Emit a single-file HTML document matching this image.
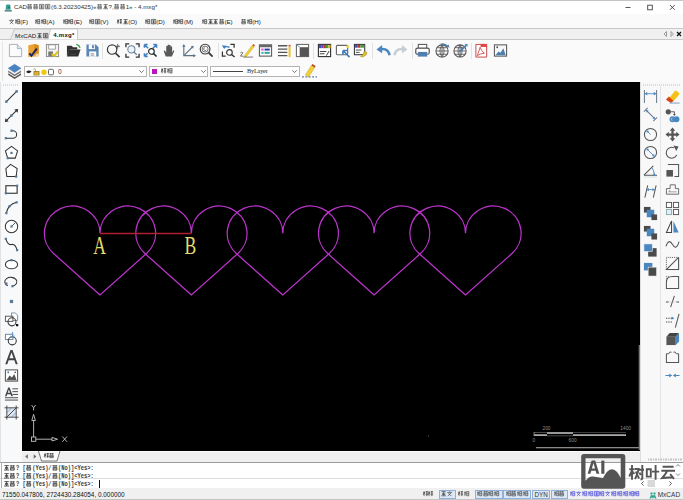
<!DOCTYPE html>
<html><head><meta charset="utf-8">
<style>
*{margin:0;padding:0;box-sizing:border-box}
html,body{width:683px;height:500px;overflow:hidden;background:#f5f5f5;font-family:"Liberation Sans",sans-serif;color:#222}
.a{position:absolute}
.t{position:absolute;white-space:nowrap;line-height:1}
.t b{display:inline-block;position:relative;font-weight:inherit;overflow:visible}
svg{position:absolute;overflow:visible}
</style></head><body>

<div class="a" style="left:0px;top:0px;width:683px;height:14px;background:#fff;"></div>
<div class="a" style="left:0px;top:0px;width:683px;height:1px;background:#c4c4c4;"></div>
<svg style="left:4px;top:3.5px" width="9" height="8" viewBox="0 0 9 8"><path d="M1.6 5.8 L2 1.5 Q2.2 0.5 3.2 0.5 H5.3 Q6.3 0.5 6.4 1.5 L6.6 5.8Z" fill="#3a9a94"/><circle cx="5.2" cy="3.4" r="0.9" fill="#1f6a66"/><path d="M0.3 6.2 H8.2 L7.6 7.6 H1 Z" fill="#2a706c"/></svg>
<div class="t" style="left:14px;top:3.8px;font-size:6.2px;color:#333;">CAD<b style="width:6.0px;height:5.21px;vertical-align:-0.56px"><svg style="left:0.40px;top:0" width="5.21" height="5.21" viewBox="0 0 10 10" preserveAspectRatio="none"><path d="M0.5 1.6 H9.5 M3 0.3 V3.4 M7 0.3 V3.4 M1.6 4.6 H8.4 V9.3 H1.6 Z M1.6 6.95 H8.4" fill="none" stroke="currentColor" stroke-width="1.15"/></svg></b><b style="width:6.0px;height:5.21px;vertical-align:-0.56px"><svg style="left:0.40px;top:0" width="5.21" height="5.21" viewBox="0 0 10 10" preserveAspectRatio="none"><path d="M0.5 1.6 H9.5 M3 0.3 V3.4 M7 0.3 V3.4 M1.6 4.6 H8.4 V9.3 H1.6 Z M1.6 6.95 H8.4" fill="none" stroke="currentColor" stroke-width="1.15"/></svg></b><b style="width:6.0px;height:5.21px;vertical-align:-0.56px"><svg style="left:0.40px;top:0" width="5.21" height="5.21" viewBox="0 0 10 10" preserveAspectRatio="none"><path d="M0.8 0.8 H9.2 V9.3 H0.8 Z M2.8 3.2 H7.2 M2.6 5.6 H7.4 M5 3.2 V7.8 M2.8 7.8 H7.2" fill="none" stroke="currentColor" stroke-width="1.15"/></svg></b><b style="width:6.0px;height:5.21px;vertical-align:-0.56px"><svg style="left:0.40px;top:0" width="5.21" height="5.21" viewBox="0 0 10 10" preserveAspectRatio="none"><path d="M0.8 0.8 H9.2 V9.3 H0.8 Z M2.8 3.2 H7.2 M2.6 5.6 H7.4 M5 3.2 V7.8 M2.8 7.8 H7.2" fill="none" stroke="currentColor" stroke-width="1.15"/></svg></b>(6.3.20230425)«<b style="width:6.0px;height:5.21px;vertical-align:-0.56px"><svg style="left:0.40px;top:0" width="5.21" height="5.21" viewBox="0 0 10 10" preserveAspectRatio="none"><path d="M0.5 1.6 H9.5 M3 0.3 V3.4 M7 0.3 V3.4 M1.6 4.6 H8.4 V9.3 H1.6 Z M1.6 6.95 H8.4" fill="none" stroke="currentColor" stroke-width="1.15"/></svg></b><b style="width:6.0px;height:5.21px;vertical-align:-0.56px"><svg style="left:0.40px;top:0" width="5.21" height="5.21" viewBox="0 0 10 10" preserveAspectRatio="none"><path d="M1 1.1 H9 M5 1.1 V9 M2 4.4 H8 M2 6.7 H8 M0.4 9.1 H9.6" fill="none" stroke="currentColor" stroke-width="1.15"/></svg></b>?,<b style="width:6.0px;height:5.21px;vertical-align:-0.56px"><svg style="left:0.40px;top:0" width="5.21" height="5.21" viewBox="0 0 10 10" preserveAspectRatio="none"><path d="M0.5 1.6 H9.5 M3 0.3 V3.4 M7 0.3 V3.4 M1.6 4.6 H8.4 V9.3 H1.6 Z M1.6 6.95 H8.4" fill="none" stroke="currentColor" stroke-width="1.15"/></svg></b><b style="width:6.0px;height:5.21px;vertical-align:-0.56px"><svg style="left:0.40px;top:0" width="5.21" height="5.21" viewBox="0 0 10 10" preserveAspectRatio="none"><path d="M0.5 1.6 H9.5 M3 0.3 V3.4 M7 0.3 V3.4 M1.6 4.6 H8.4 V9.3 H1.6 Z M1.6 6.95 H8.4" fill="none" stroke="currentColor" stroke-width="1.15"/></svg></b>1» - 4.mxg*</div>
<svg style="left:620px;top:0" width="63" height="14" viewBox="0 0 63 14"><path d="M5.5 7.5 H10.5" stroke="#444" stroke-width="0.9"/><rect x="27.7" y="5.2" width="4.6" height="4.6" fill="none" stroke="#444" stroke-width="0.9"/><path d="M50 5 L54.7 9.8 M54.7 5 L50 9.8" stroke="#444" stroke-width="0.9"/></svg>
<div class="a" style="left:0px;top:14px;width:683px;height:14px;background:#fafafa;"></div>
<div class="t" style="left:9px;top:18.7px;font-size:6.2px;color:#222;"><b style="width:5.6px;height:5.21px;vertical-align:-0.56px"><svg style="left:0.20px;top:0" width="5.21" height="5.21" viewBox="0 0 10 10" preserveAspectRatio="none"><path d="M4.4 0.2 L5.6 1.6 M0.4 2.7 H9.6 M2.4 3.8 L8.2 9.6 M7.6 3.8 L1.6 9.6" fill="none" stroke="currentColor" stroke-width="1.15"/></svg></b><b style="width:5.6px;height:5.21px;vertical-align:-0.56px"><svg style="left:0.20px;top:0" width="5.21" height="5.21" viewBox="0 0 10 10" preserveAspectRatio="none"><path d="M0.5 3 H3.6 M2 0.4 V9.6 M0.5 6.3 L3.6 4.8 M4.6 1.2 H9.5 M5.1 1.2 V9.2 M9 1.2 V9.2 M5.1 5.2 H9 M5.1 9 H9" fill="none" stroke="currentColor" stroke-width="1.15"/></svg></b>(F)</div>
<div class="t" style="left:35px;top:18.7px;font-size:6.2px;color:#222;"><b style="width:5.6px;height:5.21px;vertical-align:-0.56px"><svg style="left:0.20px;top:0" width="5.21" height="5.21" viewBox="0 0 10 10" preserveAspectRatio="none"><path d="M0.5 3 H3.6 M2 0.4 V9.6 M0.5 6.3 L3.6 4.8 M4.6 1.2 H9.5 M5.1 1.2 V9.2 M9 1.2 V9.2 M5.1 5.2 H9 M5.1 9 H9" fill="none" stroke="currentColor" stroke-width="1.15"/></svg></b><b style="width:5.6px;height:5.21px;vertical-align:-0.56px"><svg style="left:0.20px;top:0" width="5.21" height="5.21" viewBox="0 0 10 10" preserveAspectRatio="none"><path d="M0.5 3 H3.6 M2 0.4 V9.6 M0.5 6.3 L3.6 4.8 M4.6 1.2 H9.5 M5.1 1.2 V9.2 M9 1.2 V9.2 M5.1 5.2 H9 M5.1 9 H9" fill="none" stroke="currentColor" stroke-width="1.15"/></svg></b>(A)</div>
<div class="t" style="left:62.5px;top:18.7px;font-size:6.2px;color:#222;"><b style="width:5.6px;height:5.21px;vertical-align:-0.56px"><svg style="left:0.20px;top:0" width="5.21" height="5.21" viewBox="0 0 10 10" preserveAspectRatio="none"><path d="M0.5 3 H3.6 M2 0.4 V9.6 M0.5 6.3 L3.6 4.8 M4.6 1.2 H9.5 M5.1 1.2 V9.2 M9 1.2 V9.2 M5.1 5.2 H9 M5.1 9 H9" fill="none" stroke="currentColor" stroke-width="1.15"/></svg></b><b style="width:5.6px;height:5.21px;vertical-align:-0.56px"><svg style="left:0.20px;top:0" width="5.21" height="5.21" viewBox="0 0 10 10" preserveAspectRatio="none"><path d="M0.5 3 H3.6 M2 0.4 V9.6 M0.5 6.3 L3.6 4.8 M4.6 1.2 H9.5 M5.1 1.2 V9.2 M9 1.2 V9.2 M5.1 5.2 H9 M5.1 9 H9" fill="none" stroke="currentColor" stroke-width="1.15"/></svg></b>(E)</div>
<div class="t" style="left:89px;top:18.7px;font-size:6.2px;color:#222;"><b style="width:5.6px;height:5.21px;vertical-align:-0.56px"><svg style="left:0.20px;top:0" width="5.21" height="5.21" viewBox="0 0 10 10" preserveAspectRatio="none"><path d="M0.5 3 H3.6 M2 0.4 V9.6 M0.5 6.3 L3.6 4.8 M4.6 1.2 H9.5 M5.1 1.2 V9.2 M9 1.2 V9.2 M5.1 5.2 H9 M5.1 9 H9" fill="none" stroke="currentColor" stroke-width="1.15"/></svg></b><b style="width:5.6px;height:5.21px;vertical-align:-0.56px"><svg style="left:0.20px;top:0" width="5.21" height="5.21" viewBox="0 0 10 10" preserveAspectRatio="none"><path d="M0.8 0.8 H9.2 V9.3 H0.8 Z M2.8 3.2 H7.2 M2.6 5.6 H7.4 M5 3.2 V7.8 M2.8 7.8 H7.2" fill="none" stroke="currentColor" stroke-width="1.15"/></svg></b>(V)</div>
<div class="t" style="left:117px;top:18.7px;font-size:6.2px;color:#222;"><b style="width:5.6px;height:5.21px;vertical-align:-0.56px"><svg style="left:0.20px;top:0" width="5.21" height="5.21" viewBox="0 0 10 10" preserveAspectRatio="none"><path d="M0.3 2.8 H4 M2.1 0.3 V9.7 M2 3.6 L0.3 7.6 M2.3 4.2 L3.9 6 M5 1.1 H9.7 M5.3 4.1 H9.3 M5 7.1 H9.7 M7.3 0.3 V9.7" fill="none" stroke="currentColor" stroke-width="1.15"/></svg></b><b style="width:5.6px;height:5.21px;vertical-align:-0.56px"><svg style="left:0.20px;top:0" width="5.21" height="5.21" viewBox="0 0 10 10" preserveAspectRatio="none"><path d="M1 1.1 H9 M5 1.1 V9 M2 4.4 H8 M2 6.7 H8 M0.4 9.1 H9.6" fill="none" stroke="currentColor" stroke-width="1.15"/></svg></b>(O)</div>
<div class="t" style="left:145px;top:18.7px;font-size:6.2px;color:#222;"><b style="width:5.6px;height:5.21px;vertical-align:-0.56px"><svg style="left:0.20px;top:0" width="5.21" height="5.21" viewBox="0 0 10 10" preserveAspectRatio="none"><path d="M0.5 3 H3.6 M2 0.4 V9.6 M0.5 6.3 L3.6 4.8 M4.6 1.2 H9.5 M5.1 1.2 V9.2 M9 1.2 V9.2 M5.1 5.2 H9 M5.1 9 H9" fill="none" stroke="currentColor" stroke-width="1.15"/></svg></b><b style="width:5.6px;height:5.21px;vertical-align:-0.56px"><svg style="left:0.20px;top:0" width="5.21" height="5.21" viewBox="0 0 10 10" preserveAspectRatio="none"><path d="M0.8 0.8 H9.2 V9.3 H0.8 Z M2.8 3.2 H7.2 M2.6 5.6 H7.4 M5 3.2 V7.8 M2.8 7.8 H7.2" fill="none" stroke="currentColor" stroke-width="1.15"/></svg></b>(D)</div>
<div class="t" style="left:172.7px;top:18.7px;font-size:6.2px;color:#222;"><b style="width:5.6px;height:5.21px;vertical-align:-0.56px"><svg style="left:0.20px;top:0" width="5.21" height="5.21" viewBox="0 0 10 10" preserveAspectRatio="none"><path d="M0.5 3 H3.6 M2 0.4 V9.6 M0.5 6.3 L3.6 4.8 M4.6 1.2 H9.5 M5.1 1.2 V9.2 M9 1.2 V9.2 M5.1 5.2 H9 M5.1 9 H9" fill="none" stroke="currentColor" stroke-width="1.15"/></svg></b><b style="width:5.6px;height:5.21px;vertical-align:-0.56px"><svg style="left:0.20px;top:0" width="5.21" height="5.21" viewBox="0 0 10 10" preserveAspectRatio="none"><path d="M0.5 3 H3.6 M2 0.4 V9.6 M0.5 6.3 L3.6 4.8 M4.6 1.2 H9.5 M5.1 1.2 V9.2 M9 1.2 V9.2 M5.1 5.2 H9 M5.1 9 H9" fill="none" stroke="currentColor" stroke-width="1.15"/></svg></b>(M)</div>
<div class="t" style="left:202px;top:18.7px;font-size:6.2px;color:#222;"><b style="width:5.6px;height:5.21px;vertical-align:-0.56px"><svg style="left:0.20px;top:0" width="5.21" height="5.21" viewBox="0 0 10 10" preserveAspectRatio="none"><path d="M0.5 3 H3.6 M2 0.4 V9.6 M0.5 6.3 L3.6 4.8 M4.6 1.2 H9.5 M5.1 1.2 V9.2 M9 1.2 V9.2 M5.1 5.2 H9 M5.1 9 H9" fill="none" stroke="currentColor" stroke-width="1.15"/></svg></b><b style="width:5.6px;height:5.21px;vertical-align:-0.56px"><svg style="left:0.20px;top:0" width="5.21" height="5.21" viewBox="0 0 10 10" preserveAspectRatio="none"><path d="M1 1.1 H9 M5 1.1 V9 M2 4.4 H8 M2 6.7 H8 M0.4 9.1 H9.6" fill="none" stroke="currentColor" stroke-width="1.15"/></svg></b><b style="width:5.6px;height:5.21px;vertical-align:-0.56px"><svg style="left:0.20px;top:0" width="5.21" height="5.21" viewBox="0 0 10 10" preserveAspectRatio="none"><path d="M1 1.1 H9 M5 1.1 V9 M2 4.4 H8 M2 6.7 H8 M0.4 9.1 H9.6" fill="none" stroke="currentColor" stroke-width="1.15"/></svg></b><b style="width:5.6px;height:5.21px;vertical-align:-0.56px"><svg style="left:0.20px;top:0" width="5.21" height="5.21" viewBox="0 0 10 10" preserveAspectRatio="none"><path d="M0.5 1.6 H9.5 M3 0.3 V3.4 M7 0.3 V3.4 M1.6 4.6 H8.4 V9.3 H1.6 Z M1.6 6.95 H8.4" fill="none" stroke="currentColor" stroke-width="1.15"/></svg></b>(E)</div>
<div class="t" style="left:241px;top:18.7px;font-size:6.2px;color:#222;"><b style="width:5.6px;height:5.21px;vertical-align:-0.56px"><svg style="left:0.20px;top:0" width="5.21" height="5.21" viewBox="0 0 10 10" preserveAspectRatio="none"><path d="M0.5 1.6 H9.5 M3 0.3 V3.4 M7 0.3 V3.4 M1.6 4.6 H8.4 V9.3 H1.6 Z M1.6 6.95 H8.4" fill="none" stroke="currentColor" stroke-width="1.15"/></svg></b><b style="width:5.6px;height:5.21px;vertical-align:-0.56px"><svg style="left:0.20px;top:0" width="5.21" height="5.21" viewBox="0 0 10 10" preserveAspectRatio="none"><path d="M0.5 3 H3.6 M2 0.4 V9.6 M0.5 6.3 L3.6 4.8 M4.6 1.2 H9.5 M5.1 1.2 V9.2 M9 1.2 V9.2 M5.1 5.2 H9 M5.1 9 H9" fill="none" stroke="currentColor" stroke-width="1.15"/></svg></b>(H)</div>
<div class="a" style="left:0px;top:28px;width:683px;height:12px;background:#f0f0f0;border-top:1px solid #c8c8c8;border-bottom:1px solid #c8c8c8"></div>
<svg style="left:0;top:28px" width="100" height="12" viewBox="0 0 100 12"><path d="M10.5 11.5 L14.5 1 L51 1 L51 11.5" fill="#eaeaea" stroke="#c0c0c0" stroke-width="0.8"/><path d="M48 11.6 L50.5 1 L77.5 1 L77.5 11.6" fill="#fff" stroke="#c0c0c0" stroke-width="0.8"/></svg>
<div class="t" style="left:15px;top:32.6px;font-size:6.2px;color:#222;">MxCAD<b style="width:6px;height:5.21px;vertical-align:-0.56px"><svg style="left:0.40px;top:0" width="5.21" height="5.21" viewBox="0 0 10 10" preserveAspectRatio="none"><path d="M1 1.1 H9 M5 1.1 V9 M2 4.4 H8 M2 6.7 H8 M0.4 9.1 H9.6" fill="none" stroke="currentColor" stroke-width="1.15"/></svg></b><b style="width:6px;height:5.21px;vertical-align:-0.56px"><svg style="left:0.40px;top:0" width="5.21" height="5.21" viewBox="0 0 10 10" preserveAspectRatio="none"><path d="M0.8 0.8 H9.2 V9.3 H0.8 Z M2.8 3.2 H7.2 M2.6 5.6 H7.4 M5 3.2 V7.8 M2.8 7.8 H7.2" fill="none" stroke="currentColor" stroke-width="1.15"/></svg></b></div>
<div class="t" style="left:53.2px;top:32.4px;font-size:6px;color:#111;font-weight:bold;letter-spacing:0.3px">4.mxg*</div>
<svg style="left:663px;top:31px" width="20" height="6" viewBox="0 0 20 6"><path d="M3.5 0.5 L1 3 L3.5 5.5Z" fill="none" stroke="#888" stroke-width="0.8"/><path d="M8 0.5 L10.5 3 L8 5.5Z" fill="none" stroke="#888" stroke-width="0.8"/><path d="M14 1 L18 5 M18 1 L14 5" stroke="#111" stroke-width="1.3"/></svg>
<div class="a" style="left:0px;top:40px;width:683px;height:42px;background:#fafafa;"></div>
<div class="a" style="left:1.5px;top:41px;width:1px;height:40px;background:#e6e6e6;"></div>
<svg style="left:7.800000000000001px;top:43.2px" width="15" height="15" viewBox="0 0 16 16"><path d="M1.5 1.5 H10 L14.5 6 V14.5 H1.5 Z" fill="#fbfbfb" stroke="#a8adb3" stroke-width="1"/><path d="M10 1.5 V6 H14.5" fill="#dde8f0" stroke="#8fb0c8" stroke-width="0.9"/></svg>
<svg style="left:26.299999999999997px;top:43.2px" width="15" height="15" viewBox="0 0 16 16"><path d="M2.5 2.5 L9 1 L13.5 2.5 V14 L2.5 15 Z" fill="#eaa332"/><path d="M9 1 L13.5 2.5 V14 L9 13Z" fill="#d98a1a"/><path d="M3.5 11 L5.8 13.6 L11.5 6" stroke="#1e2466" stroke-width="2.1" fill="none"/><path d="M10.5 11.5 H13.5 V14 H10Z" fill="#e8e0c0"/></svg>
<svg style="left:44.8px;top:43.2px" width="15" height="15" viewBox="0 0 16 16"><rect x="1.5" y="1.5" width="13" height="13" fill="#f2f2f2" stroke="#8a8a8a"/><rect x="4" y="2" width="7" height="4.5" fill="#fff" stroke="#8a8a8a" stroke-width="0.8"/><rect x="3.5" y="9" width="5" height="5" fill="#777"/><path d="M7 12 L10 13.5 L14 9" stroke="#d9c21a" stroke-width="2.2" fill="none"/></svg>
<svg style="left:66.2px;top:43.2px" width="15" height="15" viewBox="0 0 16 16"><path d="M1 3 H6 L7.5 4.5 H12 V7 H4 L1 14 Z" fill="#333"/><path d="M3.5 7 H15.5 L13 14.5 H1 Z" fill="#2e2e2e"/><path d="M4 12 H11" stroke="#555" stroke-width="0.6"/><path d="M11 1.5 Q14 2 15 5" stroke="#2f9a4a" stroke-width="1.4" fill="none"/></svg>
<svg style="left:84.7px;top:43.2px" width="15" height="15" viewBox="0 0 16 16"><path d="M1.5 1.5 H11.5 L14.5 4.5 V14.5 H1.5 Z" fill="#5a87b3"/><rect x="4" y="1.5" width="6.5" height="5" fill="#fff"/><rect x="7.5" y="2.3" width="2" height="3.3" fill="#5a87b3"/><rect x="4.5" y="9" width="7.5" height="5.5" fill="#fff"/><path d="M6 11.5 H9.5 M6 13 H10" stroke="#666" stroke-width="0.7"/></svg>
<svg style="left:106.0px;top:43.2px" width="15" height="15" viewBox="0 0 16 16"><circle cx="6.5" cy="7" r="5" fill="none" stroke="#3c3c3c" stroke-width="1.3"/><path d="M10.2 10.7 L14.5 15" stroke="#3c3c3c" stroke-width="1.8"/><path d="M12.5 1 V6 M10 3.5 H15" stroke="#444" stroke-width="0.9"/></svg>
<svg style="left:124.5px;top:43.2px" width="15" height="15" viewBox="0 0 16 16"><path d="M1 4.5 V1 H4.5 M11.5 1 H15 V4.5 M15 11.5 V15 H11.5 M4.5 15 H1 V11.5" fill="none" stroke="#333" stroke-width="1.4"/><circle cx="6.8" cy="6.8" r="3.8" fill="#eef3f8" stroke="#6a7f98" stroke-width="1.1"/><path d="M9.5 9.5 L12.5 12.5" stroke="#6a7f98" stroke-width="1.4"/></svg>
<svg style="left:143.3px;top:43.2px" width="15" height="15" viewBox="0 0 16 16"><path d="M1.5 1.5 L5.5 5.5 M1.5 1.5 H5 M1.5 1.5 V5 M14.5 1.5 L10.5 5.5 M14.5 1.5 H11 M14.5 1.5 V5 M1.5 14.5 L5 11 M1.5 14.5 H5 M1.5 14.5 V11" stroke="#3d7fc0" stroke-width="1.6" fill="none"/><circle cx="9" cy="9" r="3" fill="#fff" stroke="#222" stroke-width="1.2"/><path d="M11.2 11.2 L14.5 14.5" stroke="#222" stroke-width="1.6"/></svg>
<svg style="left:161.5px;top:43.2px" width="15" height="15" viewBox="0 0 16 16"><path d="M4 14.5 L2 9 Q1.8 7.8 3 8 L4.5 10 V3.5 Q5.3 2.5 6 3.5 V8 V2 Q6.8 1 7.6 2 V8 V2.5 Q8.4 1.5 9.2 2.5 V8.5 V4 Q10 3 10.8 4 V10 L12 8 Q13 7.5 13 8.8 L10.5 14.5 Z" fill="#595959"/></svg>
<svg style="left:180.5px;top:43.2px" width="15" height="15" viewBox="0 0 16 16"><path d="M3 2 V13.5 H15" fill="none" stroke="#5f7386" stroke-width="1.2"/><path d="M3 13.5 L12.5 4" stroke="#5f7386" stroke-width="1.2"/><path d="M1.3 4 L3 1 L4.7 4Z M13 11.8 L16 13.5 L13 15.2Z M10.5 3.5 L13.5 3 L13 6Z" fill="#5f7386"/></svg>
<svg style="left:198.5px;top:43.2px" width="15" height="15" viewBox="0 0 16 16"><circle cx="6.5" cy="6.5" r="5.2" fill="#fff" stroke="#3c3c3c" stroke-width="1.2"/><circle cx="6.5" cy="6.5" r="3.2" fill="none" stroke="#555" stroke-width="0.9"/><path d="M6.5 5 A1.5 1.5 0 1 0 7.8 7.3" fill="none" stroke="#555" stroke-width="0.9"/><path d="M10.4 10.4 L14.5 14.5" stroke="#3c3c3c" stroke-width="1.9"/></svg>
<svg style="left:220.5px;top:43.2px" width="15" height="15" viewBox="0 0 16 16"><path d="M10 1.5 H14 V5 M1.5 9 V14 H5" fill="none" stroke="#333" stroke-width="1.3"/><circle cx="9" cy="10" r="3" fill="#fff" stroke="#333" stroke-width="1.2"/><path d="M11.2 12.2 L14.5 15" stroke="#333" stroke-width="1.5"/><path d="M9 4.5 Q5 3 3 5" fill="none" stroke="#3d7fc0" stroke-width="1.5"/><path d="M1 2.5 L3.5 6.5 L5.5 2.8Z" fill="#3d7fc0"/></svg>
<svg style="left:239.5px;top:43.2px" width="15" height="15" viewBox="0 0 16 16"><path d="M5 13 L13 2.5 L15 4 L7 14.5 L4.5 15 Z" fill="#f0cf3a" stroke="#c9a320" stroke-width="0.5"/><path d="M13 2.5 L14.3 1 L16 2.5 L15 4Z" fill="#d9542a"/><path d="M3.5 15 H14" stroke="#555" stroke-width="0.8"/><path d="M0.5 10.5 Q2 9 3 10.5 L0.5 14 H3.5" fill="none" stroke="#444" stroke-width="0.8"/></svg>
<svg style="left:258.0px;top:43.2px" width="15" height="15" viewBox="0 0 16 16"><rect x="1.5" y="2" width="13" height="12" fill="#f8f8f8" stroke="#555" stroke-width="1.1"/><rect x="1.5" y="2" width="13" height="2.5" fill="#666"/><rect x="3.5" y="6" width="2.5" height="2" fill="#d64fd6"/><rect x="7" y="6" width="5.5" height="2" fill="#2a3aa8"/><rect x="3.5" y="9.5" width="2.5" height="2" fill="#2fbfa8"/><rect x="7" y="9.5" width="5.5" height="2" fill="#2fa09a"/></svg>
<svg style="left:276.5px;top:43.2px" width="15" height="15" viewBox="0 0 16 16"><path d="M1 3 H11 M1 6.5 H11 M1 10 H11 M1 13.5 H11" stroke="#555" stroke-width="1.5"/><rect x="12.3" y="4" width="2.2" height="11" fill="#ebc53a"/><rect x="12.3" y="2" width="2.2" height="1.8" fill="#d9542a"/></svg>
<svg style="left:294.8px;top:43.2px" width="15" height="15" viewBox="0 0 16 16"><rect x="1.5" y="1.5" width="13" height="13" fill="#fff" stroke="#666" stroke-width="1.1"/><path d="M5 4.5 H14.5 V14.5 H5Z" fill="#555"/><path d="M1.5 1.5 L5 4.5" stroke="#6a8fb5" stroke-width="1"/></svg>
<svg style="left:316.5px;top:43.2px" width="15" height="15" viewBox="0 0 16 16"><rect x="1.5" y="1.5" width="13" height="13" fill="#fff" stroke="#333" stroke-width="1.2"/><rect x="2" y="2" width="2.5" height="3.5" fill="#3a55b0"/><rect x="4.5" y="2" width="2.5" height="3.5" fill="#7a3ab0"/><rect x="7" y="2" width="2.5" height="3.5" fill="#c03030"/><rect x="9.5" y="2" width="2.5" height="3.5" fill="#40a040"/><rect x="12" y="2" width="2.5" height="3.5" fill="#d0b020"/><path d="M3 9 H10 M3 11.5 H8" stroke="#444" stroke-width="1.2"/><path d="M10 13.5 L13 8.5" stroke="#333" stroke-width="1"/></svg>
<svg style="left:334.7px;top:43.2px" width="15" height="15" viewBox="0 0 16 16"><rect x="1.5" y="2.5" width="12" height="10" fill="#fff" stroke="#666" stroke-width="1.2" rx="1"/><path d="M8.5 8 L15.5 15 M8.5 8 V12.5 M8.5 8 H13" stroke="#3d7fc0" stroke-width="1.8" fill="none"/><circle cx="13.5" cy="4" r="1.5" fill="#e8d040"/></svg>
<svg style="left:352.5px;top:43.2px" width="15" height="15" viewBox="0 0 16 16"><rect x="1.5" y="1.5" width="11" height="11" fill="#fff" stroke="#333" stroke-width="1.1"/><rect x="2" y="2" width="3" height="3" fill="#3a55b0"/><rect x="5" y="2" width="3" height="3" fill="#c03030"/><rect x="8" y="2" width="4" height="3" fill="#40a040"/><path d="M3 7.5 H9 M3 10 H7" stroke="#444" stroke-width="1"/><path d="M8 14.5 Q11 13 12 9 L15 10.5 Q14 14 10 15Z" fill="#e8c020" stroke="#9a7a10" stroke-width="0.5"/></svg>
<svg style="left:375.5px;top:43.2px" width="15" height="15" viewBox="0 0 16 16"><path d="M14.5 13 Q13 5.5 5 6.5" fill="none" stroke="#4a86c0" stroke-width="2.6"/><path d="M0.5 6.8 L6.5 2 L6.5 11Z" fill="#4a86c0"/></svg>
<svg style="left:393.0px;top:43.2px" width="15" height="15" viewBox="0 0 16 16"><path d="M1.5 13 Q3 5.5 11 6.5" fill="none" stroke="#c8cdd2" stroke-width="2.6"/><path d="M15.5 6.8 L9.5 2 L9.5 11Z" fill="#c8cdd2"/></svg>
<svg style="left:415.0px;top:43.2px" width="15" height="15" viewBox="0 0 16 16"><rect x="3.5" y="1.5" width="9" height="4.5" fill="#fff" stroke="#555" stroke-width="1.1"/><rect x="0.8" y="5.5" width="14.4" height="6.5" rx="2" fill="#fff" stroke="#555" stroke-width="1.3"/><rect x="3" y="9.5" width="10" height="5" fill="#4f7fae"/></svg>
<svg style="left:434.5px;top:43.2px" width="15" height="15" viewBox="0 0 16 16"><circle cx="7.5" cy="8.5" r="6.5" fill="#fff" stroke="#555" stroke-width="1.1"/><path d="M1 8.5 H14 M2 5 H13 M2 12 H13 M7.5 2 V15 M7.5 2 Q3 8.5 7.5 15 M7.5 2 Q12 8.5 7.5 15" fill="none" stroke="#555" stroke-width="0.9"/><path d="M6 1.5 Q10 0 14 4" fill="none" stroke="#4f7fae" stroke-width="1.6"/><path d="M12 3.5 L15.5 5 L14.5 1.5Z" fill="#4f7fae"/></svg>
<svg style="left:453.2px;top:43.2px" width="15" height="15" viewBox="0 0 16 16"><circle cx="7.5" cy="8.5" r="6.5" fill="#fff" stroke="#555" stroke-width="1.1"/><path d="M1 8.5 H14 M2 5 H13 M2 12 H13 M7.5 2 V15 M7.5 2 Q3 8.5 7.5 15 M7.5 2 Q12 8.5 7.5 15" fill="none" stroke="#555" stroke-width="0.9"/><path d="M7 9.5 L14 2.5" stroke="#4f7fae" stroke-width="2"/><path d="M12.5 1 L15.5 1 L15.5 4Z" fill="#4f7fae"/></svg>
<svg style="left:473.7px;top:43.2px" width="15" height="15" viewBox="0 0 16 16"><path d="M2 1.5 H11.5 L13.5 3.5 V15 H2 Z" fill="#fff" stroke="#c94040" stroke-width="1"/><rect x="7" y="1" width="7" height="3.2" fill="#e04545"/><path d="M3.5 13.5 Q5.5 8 6.5 4.5 Q7.5 8 11 11 Q7 11 3.5 13.5" fill="none" stroke="#d04040" stroke-width="0.9"/></svg>
<svg style="left:493.0px;top:43.2px" width="15" height="15" viewBox="0 0 16 16"><rect x="1.5" y="2" width="13" height="12" fill="#f6f8fa" stroke="#555" stroke-width="1.1"/><path d="M2.5 13 L6 9 L8 10.5 L11 5.5 L13.5 13Z" fill="#4f7fae"/><circle cx="4.5" cy="4.5" r="1" fill="#555"/></svg>
<div class="a" style="left:102.3px;top:43px;width:1px;height:16px;background:#e2e2e2;"></div>
<div class="a" style="left:217.8px;top:43px;width:1px;height:16px;background:#e2e2e2;"></div>
<div class="a" style="left:313.2px;top:43px;width:1px;height:16px;background:#e2e2e2;"></div>
<div class="a" style="left:371.7px;top:43px;width:1px;height:16px;background:#e2e2e2;"></div>
<div class="a" style="left:411.5px;top:43px;width:1px;height:16px;background:#e2e2e2;"></div>
<div class="a" style="left:471px;top:43px;width:1px;height:16px;background:#e2e2e2;"></div>
<svg style="left:0;top:0" width="30" height="82" viewBox="0 0 30 82"><path d="M8.2 73.2 L14.6 77.2 L21 73.2 V75 L14.6 79 L8.2 75Z" fill="#555"/><path d="M8.2 70.6 L14.6 74.6 L21 70.6 V72.3 L14.6 76.3 L8.2 72.3Z" fill="#777"/><path d="M14.6 64.2 L21 68.3 L14.6 72.6 L8.2 68.3 Z" fill="#4a84c0" stroke="#3a6a9a" stroke-width="0.4"/></svg>
<div class="a" style="left:24px;top:66px;width:122.5px;height:11px;background:#fff;border:1px solid #b4b4b4"></div>
<svg style="left:139.2px;top:70px" width="5" height="3" viewBox="0 0 5 3"><path d="M0.3 0.3 L2.5 2.6 L4.7 0.3" fill="none" stroke="#555" stroke-width="0.8"/></svg>
<div class="a" style="left:149.3px;top:66px;width:58.5px;height:11px;background:#fff;border:1px solid #b4b4b4"></div>
<svg style="left:200.7px;top:70px" width="5" height="3" viewBox="0 0 5 3"><path d="M0.3 0.3 L2.5 2.6 L4.7 0.3" fill="none" stroke="#555" stroke-width="0.8"/></svg>
<div class="a" style="left:210px;top:66px;width:89.6px;height:11px;background:#fff;border:1px solid #b4b4b4"></div>
<svg style="left:291.8px;top:70px" width="5" height="3" viewBox="0 0 5 3"><path d="M0.3 0.3 L2.5 2.6 L4.7 0.3" fill="none" stroke="#555" stroke-width="0.8"/></svg>
<svg style="left:25px;top:67.5px" width="30" height="8" viewBox="0 0 30 8"><path d="M1 4 Q3.5 1.5 6.5 3.5 Q4 6.5 1 4Z" fill="#222"/><path d="M8.5 1 Q10 0 10.5 2 V3" fill="none" stroke="#8a7a30" stroke-width="0.7"/><rect x="8.5" y="3" width="6" height="4.5" fill="#a08a2a"/><rect x="9.5" y="4" width="4" height="3" fill="#d8b030"/><circle cx="19" cy="4.2" r="2.7" fill="#f0c810"/><rect x="23.5" y="1.3" width="5" height="5.5" rx="1" fill="#fff" stroke="#555" stroke-width="0.9"/></svg>
<div class="t" style="left:58px;top:68.5px;font-size:6.5px;color:#333;">0</div>
<div class="a" style="left:152px;top:69.2px;width:5px;height:5px;background:#b818b8;"></div>
<div class="t" style="left:161px;top:68.3px;font-size:6.6px;color:#222;"><b style="width:6px;height:5.54px;vertical-align:-0.59px"><svg style="left:0.23px;top:0" width="5.54" height="5.54" viewBox="0 0 10 10" preserveAspectRatio="none"><path d="M0.3 2.8 H4 M2.1 0.3 V9.7 M2 3.6 L0.3 7.6 M2.3 4.2 L3.9 6 M5 1.1 H9.7 M5.3 4.1 H9.3 M5 7.1 H9.7 M7.3 0.3 V9.7" fill="none" stroke="currentColor" stroke-width="1.15"/></svg></b><b style="width:6px;height:5.54px;vertical-align:-0.59px"><svg style="left:0.23px;top:0" width="5.54" height="5.54" viewBox="0 0 10 10" preserveAspectRatio="none"><path d="M0.5 3 H3.6 M2 0.4 V9.6 M0.5 6.3 L3.6 4.8 M4.6 1.2 H9.5 M5.1 1.2 V9.2 M9 1.2 V9.2 M5.1 5.2 H9 M5.1 9 H9" fill="none" stroke="currentColor" stroke-width="1.15"/></svg></b></div>
<div class="a" style="left:212.6px;top:71px;width:30.5px;height:0.9px;background:#444;"></div>
<div class="t" style="left:247px;top:68.4px;font-size:6.2px;color:#222;font-family:'Liberation Serif',serif;letter-spacing:-0.15px">ByLayer</div>
<svg style="left:301.5px;top:63.3px" width="15" height="15" viewBox="0 0 16 16"><path d="M3.5 12.8 L10 2.6 L13.6 4.8 L7 15 Z" fill="#f0cf3a" stroke="#c9a320" stroke-width="0.5"/><path d="M10 2.6 L11 1 L14.6 3.2 L13.6 4.8Z" fill="#b8452a"/><path d="M0 14.8 H16" stroke="#5b7fa8" stroke-width="1.3" stroke-dasharray="2 1.6"/></svg>
<div class="a" style="left:0px;top:82px;width:22px;height:380px;background:#f8f9fa;"></div>
<div class="a" style="left:0px;top:82px;width:1px;height:380px;background:#e2e2e2;"></div>
<svg style="left:3px;top:84px" width="16" height="2" viewBox="0 0 16 2"><path d="M0 1 H16" stroke="#b9c4cf" stroke-width="1" stroke-dasharray="1 1"/></svg>
<svg style="left:3.5px;top:88.9px" width="15" height="15" viewBox="0 0 16 16"><path d="M2.5 13.5 L13.5 2.5" stroke="#333" stroke-width="1.1"/><rect x="1.2" y="12.2" width="2.6" height="2.6" fill="#5a7898"/><rect x="12.2" y="1.2" width="2.6" height="2.6" fill="#5a7898"/></svg>
<svg style="left:3.5px;top:107.5px" width="15" height="15" viewBox="0 0 16 16"><path d="M1.5 14.5 L14.5 1.5" stroke="#333" stroke-width="1.1"/><path d="M1 15 L1.5 11 L5 14.5Z M15 1 L14.5 5 L11 1.5Z" fill="#333"/><rect x="6.7" y="6.7" width="2.6" height="2.6" fill="#5a7898"/></svg>
<svg style="left:3.5px;top:126.0px" width="15" height="15" viewBox="0 0 16 16"><path d="M2 13 H9.5 A4 4 0 0 0 9.5 5 H8" fill="none" stroke="#333" stroke-width="1.1"/><rect x="0.8" y="11.8" width="2.4" height="2.4" fill="#5a7898"/><rect x="6.8" y="3.8" width="2.4" height="2.4" fill="#5a7898"/></svg>
<svg style="left:3.5px;top:145.0px" width="15" height="15" viewBox="0 0 16 16"><path d="M8 1.5 L14.5 6.3 L12 14 H4 L1.5 6.3Z" fill="#fff" stroke="#333" stroke-width="1.1"/><rect x="6.8" y="7.3" width="2.4" height="2.4" fill="#5a7898"/><rect x="2.8" y="12.8" width="2.4" height="2.4" fill="#5a7898"/></svg>
<svg style="left:3.5px;top:162.8px" width="15" height="15" viewBox="0 0 16 16"><path d="M7 1.5 L14 6 L13 14.5 H3 L2 6Z" fill="#fff" stroke="#333" stroke-width="1.1"/><rect x="11.8" y="13.3" width="2.4" height="2.4" fill="#5a7898"/></svg>
<svg style="left:3.5px;top:181.5px" width="15" height="15" viewBox="0 0 16 16"><rect x="2" y="4" width="12" height="8" fill="#fff" stroke="#333" stroke-width="1.2"/><rect x="0.8" y="10.8" width="2.4" height="2.4" fill="#5a7898"/><rect x="12.8" y="2.8" width="2.4" height="2.4" fill="#5a7898"/></svg>
<svg style="left:3.5px;top:200.3px" width="15" height="15" viewBox="0 0 16 16"><path d="M2.5 14 Q4 5 13.5 2.5" fill="none" stroke="#333" stroke-width="1.1"/><rect x="1.3" y="12.8" width="2.4" height="2.4" fill="#5a7898"/><rect x="4.8" y="5.3" width="2.4" height="2.4" fill="#5a7898"/><rect x="12.3" y="1.3" width="2.4" height="2.4" fill="#5a7898"/></svg>
<svg style="left:3.5px;top:218.9px" width="15" height="15" viewBox="0 0 16 16"><circle cx="8" cy="8" r="6.6" fill="#fff" stroke="#333" stroke-width="1.1"/><path d="M8 8 L12 4" stroke="#333" stroke-width="0.9"/><rect x="6.8" y="6.8" width="2.4" height="2.4" fill="#5a7898"/></svg>
<svg style="left:3.5px;top:237.3px" width="15" height="15" viewBox="0 0 16 16"><path d="M2 2 Q4 9 8 8 Q12 7 14 14" fill="none" stroke="#333" stroke-width="1.1"/><rect x="0.8" y="0.8" width="2.4" height="2.4" fill="#5a7898"/><rect x="12.8" y="12.8" width="2.4" height="2.4" fill="#5a7898"/></svg>
<svg style="left:3.5px;top:257.0px" width="15" height="15" viewBox="0 0 16 16"><ellipse cx="8" cy="8" rx="6.5" ry="4.6" fill="#fff" stroke="#333" stroke-width="1.1"/><rect x="6.8" y="2.2" width="2.4" height="2.4" fill="#5a7898"/></svg>
<svg style="left:3.5px;top:273.8px" width="15" height="15" viewBox="0 0 16 16"><path d="M4 12.5 A6.5 4.8 0 1 1 9 13" fill="none" stroke="#333" stroke-width="1.1"/><rect x="1.3" y="9" width="2.4" height="2.4" fill="#5a7898"/><rect x="7.8" y="11.8" width="2.4" height="2.4" fill="#5a7898"/></svg>
<svg style="left:3.5px;top:293.8px" width="15" height="15" viewBox="0 0 16 16"><rect x="6.3" y="6.3" width="3.4" height="3.4" fill="#5a7898"/></svg>
<svg style="left:3.5px;top:311.8px" width="15" height="15" viewBox="0 0 16 16"><path d="M8 1 H12 L14.5 3.5 V9 H8Z" fill="#fff" stroke="#6a7f98" stroke-width="0.9"/><rect x="1.5" y="4.5" width="8" height="5.5" fill="#fff" stroke="#555" stroke-width="1"/><circle cx="8.5" cy="10.5" r="4.3" fill="none" stroke="#333" stroke-width="1.1"/><rect x="12.8" y="12.8" width="2.4" height="2.4" fill="#111"/></svg>
<svg style="left:3.5px;top:330.8px" width="15" height="15" viewBox="0 0 16 16"><rect x="1.5" y="3.5" width="8" height="5.5" fill="#fff" stroke="#6a7f98" stroke-width="1"/><circle cx="8.8" cy="10.5" r="4.3" fill="none" stroke="#333" stroke-width="1.1"/><path d="M9 1 V7 M7 5 L9 7.5 L11 5" fill="none" stroke="#5b8fc8" stroke-width="1"/></svg>
<svg style="left:3.5px;top:350.0px" width="15" height="15" viewBox="0 0 16 16"><path d="M1.3 15.2 L6.9 0 H9.1 L14.7 15.2 H12.5 L11 11 H5 L3.5 15.2Z M5.8 8.9 H10.2 L8 2.6Z" fill="#444" fill-rule="evenodd"/></svg>
<svg style="left:3.5px;top:367.7px" width="15" height="15" viewBox="0 0 16 16"><rect x="1.5" y="2" width="13" height="12" fill="#fff" stroke="#555" stroke-width="1.1"/><path d="M2.5 13 L6 8 L8.5 10 L11 6.5 L13.5 13Z" fill="#555"/><circle cx="4.5" cy="4.5" r="1" fill="#5a7898"/><circle cx="12" cy="4.5" r="0.9" fill="#555"/></svg>
<svg style="left:3.5px;top:386.4px" width="15" height="15" viewBox="0 0 16 16"><path d="M1 11 L4.5 1.5 H6 L9.5 11 H7.8 L7 8.7 H3.5 L2.7 11Z M4 7.3 H6.5 L5.2 3.6Z" fill="#444" fill-rule="evenodd"/><path d="M9 3 H15 M9 6 H15 M9 9 H15 M1 12.5 H15 M1 15 H15" stroke="#444" stroke-width="1"/></svg>
<svg style="left:3.5px;top:404.8px" width="15" height="15" viewBox="0 0 16 16"><rect x="3" y="3" width="10" height="10" fill="#dbe6f2"/><path d="M3 8 L8 3 M3 13 L13 3 M8 13 L13 8" stroke="#8aa4c0" stroke-width="0.9"/><path d="M3 0.5 V15.5 M13 0.5 V15.5 M0.5 3 H15.5 M0.5 13 H15.5 M3 13 L13 3" stroke="#444" stroke-width="1"/></svg>
<div class="a" style="left:22px;top:82px;width:618px;height:369px;background:#000;"></div>
<svg style="left:0;top:0" width="683" height="500" viewBox="0 0 683 500">
  <g fill="none" stroke="#bc34cc" stroke-width="1.25"><path d="M100 295 L53.51 253.5 A27.8 27.3 0 1 1 100 233.3 A27.8 27.3 0 1 1 146.49 253.5 Z"/><path d="M191.4 295 L144.91 253.5 A27.8 27.3 0 1 1 191.4 233.3 A27.8 27.3 0 1 1 237.89 253.5 Z"/><path d="M282.8 295 L236.31 253.5 A27.8 27.3 0 1 1 282.8 233.3 A27.8 27.3 0 1 1 329.29 253.5 Z"/><path d="M374.1 295 L327.61 253.5 A27.8 27.3 0 1 1 374.1 233.3 A27.8 27.3 0 1 1 420.59 253.5 Z"/><path d="M465.5 295 L419.01 253.5 A27.8 27.3 0 1 1 465.5 233.3 A27.8 27.3 0 1 1 511.99 253.5 Z"/></g>
  <line x1="100" y1="233.55" x2="191.4" y2="233.55" stroke="#b01e32" stroke-width="1.45"/>
  <text x="0" y="0" font-family="Liberation Serif" font-size="25.2" fill="#e2dc6c" text-anchor="middle" transform="translate(99.7 253.9) scale(0.7 1)">A</text>
  <text x="0" y="0" font-family="Liberation Serif" font-size="25.2" fill="#e2dc6c" text-anchor="middle" transform="translate(190.5 253.9) scale(0.7 1)">B</text>
  <g stroke="#c4c4c4" stroke-width="0.9" fill="none">
    <rect x="31.5" y="437" width="4.3" height="4.3"/>
    <line x1="33.6" y1="437" x2="33.6" y2="420"/>
    <path d="M31.8 420.5 L33.6 414.3 L35.4 420.5 Z"/>
    <line x1="35.8" y1="439.2" x2="52" y2="439.2"/>
    <path d="M52 437.4 L57.5 439.2 L52 441 Z"/>
    <path d="M31.6 405 L33.6 407.8 L35.6 405 M33.6 407.8 L33.6 410.5"/>
    <path d="M62.3 436.5 L67 441.8 M67 436.5 L62.3 441.8"/>
  </g>
  <g fill="#bdbdbd">
    <rect x="534" y="434.3" width="13" height="1.6"/>
    <rect x="547" y="432.2" width="26" height="1.6"/>
    <rect x="573" y="434.3" width="53" height="1.6"/>
    <rect x="534" y="432.2" width="13" height="0.6" fill="#777"/>
    <rect x="547" y="435.6" width="26" height="0.6" fill="#777"/>
    <rect x="573" y="432.2" width="53" height="0.6" fill="#666"/>
    <rect x="533.6" y="432" width="0.8" height="4" fill="#999"/>
  </g>
  <g font-family="Liberation Sans" font-size="4.8" fill="#8c8c8c">
    <text x="542.5" y="430.2">200</text>
    <text x="620.3" y="430.2">1400</text>
    <text x="532.6" y="441.5">0</text>
    <text x="568.6" y="441.5">600</text>
  </g>
  <rect x="536" y="447" width="104" height="1.3" fill="#8a8a8a"/>
  <rect x="638.7" y="345" width="1.3" height="105" fill="#7a7a7a"/>
  <rect x="428" y="435.5" width="1" height="1" fill="#666"/>
</svg>
<div class="a" style="left:640px;top:82px;width:43px;height:380px;background:#f8f8f9;"></div>
<div class="a" style="left:660.3px;top:86px;width:1px;height:372px;background:#e2e4e8;"></div>
<div class="a" style="left:640px;top:82px;width:1px;height:380px;background:#dedede;"></div>
<svg style="left:648px;top:457.5px" width="35" height="3" viewBox="0 0 35 3"><path d="M0 1.5 H35" stroke="#c4c4c4" stroke-width="2.2" stroke-dasharray="1.2 0.8 2 1"/></svg>
<svg style="left:643px;top:84px" width="38" height="2" viewBox="0 0 38 2"><path d="M0 1 H38" stroke="#b9c4cf" stroke-width="1" stroke-dasharray="1 1"/></svg>
<svg style="left:643.3px;top:88.9px" width="15" height="15" viewBox="0 0 16 16"><path d="M1.5 1 V15 M14.5 1 V15" stroke="#6a7a8a" stroke-width="1.1"/><path d="M2 5 H14" stroke="#4a86c0" stroke-width="0.9"/><path d="M2 5 L4.5 3 V7Z M14 5 L11.5 3 V7Z" fill="#4a86c0"/></svg>
<svg style="left:643.3px;top:107.1px" width="15" height="15" viewBox="0 0 16 16"><path d="M1 5 L5 1 M11 15 L15 11 M3 3 L13 13" stroke="#6a7a8a" stroke-width="1.1"/><path d="M3 3 L6 4 L4 6Z M13 13 L10 12 L12 10Z" fill="#4a86c0"/></svg>
<svg style="left:643.3px;top:126.5px" width="15" height="15" viewBox="0 0 16 16"><circle cx="8" cy="8" r="6.5" fill="none" stroke="#555" stroke-width="1.1"/><path d="M8 8 L4 4" stroke="#4a86c0" stroke-width="1"/><path d="M3.5 3.5 L6.5 4.2 L4.2 6.5Z" fill="#4a86c0"/></svg>
<svg style="left:643.3px;top:144.5px" width="15" height="15" viewBox="0 0 16 16"><circle cx="8" cy="8" r="6.5" fill="none" stroke="#555" stroke-width="1.1"/><path d="M4 4 L12 12" stroke="#4a86c0" stroke-width="1"/><path d="M3.5 3.5 L6.5 4.2 L4.2 6.5Z M12.5 12.5 L9.5 11.8 L11.8 9.5Z" fill="#4a86c0"/></svg>
<svg style="left:643.3px;top:162.9px" width="15" height="15" viewBox="0 0 16 16"><path d="M1 13 L11 3 M1 13 H15" stroke="#555" stroke-width="1.1"/><path d="M9.5 5 Q12 8 12 12.5" fill="none" stroke="#4a86c0" stroke-width="1"/><path d="M10.5 13.5 L12 10.5 L13.5 13.5Z" fill="#4a86c0"/><path d="M1 15 H15" stroke="#cdd" stroke-width="0.8"/></svg>
<svg style="left:643.3px;top:184.0px" width="15" height="15" viewBox="0 0 16 16"><path d="M2 14.5 L5 1.5 M11 14.5 L14 1.5" stroke="#555" stroke-width="1.1"/><path d="M4 6 H12.5" stroke="#4a86c0" stroke-width="0.9"/><path d="M4 6 L6.3 4.3 V7.7Z M12.5 6 L10.2 4.3 V7.7Z" fill="#4a86c0"/></svg>
<svg style="left:643.3px;top:206.1px" width="15" height="15" viewBox="0 0 16 16"><rect x="1" y="1" width="7" height="6" fill="#4a4a4a"/><rect x="4" y="4" width="8" height="8" fill="#4a86c0"/><rect x="9" y="9" width="6" height="6" fill="#4a4a4a"/></svg>
<svg style="left:643.3px;top:224.5px" width="15" height="15" viewBox="0 0 16 16"><rect x="1" y="1" width="7" height="6" fill="#4a4a4a"/><rect x="4" y="4" width="8" height="8" fill="#4a86c0"/><rect x="9" y="9" width="6" height="6.5" fill="#4a4a4a"/></svg>
<svg style="left:643.3px;top:243.3px" width="15" height="15" viewBox="0 0 16 16"><rect x="5.5" y="5.5" width="9" height="9" fill="#4a4a4a"/><rect x="1" y="1" width="9" height="8" fill="#4a86c0" stroke="#f4f5f7" stroke-width="0.6"/></svg>
<svg style="left:643.3px;top:261.7px" width="15" height="15" viewBox="0 0 16 16"><rect x="1" y="1" width="9" height="8" fill="#4a86c0"/><rect x="5.5" y="5.5" width="9" height="9.5" fill="#4a4a4a" stroke="#f4f5f7" stroke-width="0.6"/></svg>
<svg style="left:664.7px;top:88.5px" width="15" height="15" viewBox="0 0 16 16"><path d="M4 10 L10.5 2 Q11.5 1 12.5 2 L15 4.2 Q15.8 5 15 6 L8.5 13.5Z" fill="#f2c316"/><path d="M1 11.5 L4 8 L9 12.5 L6.5 15 Z" fill="#d94418"/><path d="M5 15 H15.5" stroke="#6a8fb5" stroke-width="0.9"/></svg>
<svg style="left:664.7px;top:107.5px" width="15" height="15" viewBox="0 0 16 16"><circle cx="3.5" cy="4" r="2.8" fill="#555"/><path d="M6.5 4 H10 V7.5" fill="none" stroke="#555" stroke-width="1"/><path d="M8.5 6.5 L10 8.5 L11.5 6.5Z" fill="#555"/><circle cx="8" cy="12" r="3.2" fill="#4a86c0"/><circle cx="12.2" cy="12" r="3.2" fill="#4a86c0"/><path d="M8 10.7 A1.3 1.3 0 1 0 8 13.3" fill="none" stroke="#fff" stroke-width="0.5"/></svg>
<svg style="left:664.7px;top:126.5px" width="15" height="15" viewBox="0 0 16 16"><path d="M8 0.5 L11 4 H9.2 V6.8 H12 V5 L15.5 8 L12 11 V9.2 H9.2 V12 H11 L8 15.5 L5 12 H6.8 V9.2 H4 V11 L0.5 8 L4 5 V6.8 H6.8 V4 H5Z" fill="#555"/></svg>
<svg style="left:664.7px;top:144.5px" width="15" height="15" viewBox="0 0 16 16"><path d="M12.5 10.5 A5.8 5.8 0 1 1 9.5 3" fill="none" stroke="#555" stroke-width="1.1"/><path d="M9 0.5 L14.5 1.5 L12 6.5Z" fill="#555"/></svg>
<svg style="left:664.7px;top:162.9px" width="15" height="15" viewBox="0 0 16 16"><path d="M3 1.5 H14.5 V14.5 H10" fill="none" stroke="#555" stroke-width="1.1"/><rect x="1.5" y="7.5" width="7" height="7" fill="#555"/></svg>
<svg style="left:664.7px;top:181.5px" width="15" height="15" viewBox="0 0 16 16"><path d="M1.5 13 V7 H5.5 V3 H11 V7 H14.5 V13Z" fill="none" stroke="#666" stroke-width="1"/><path d="M3.5 10.5 H12.5 M5 10.5 V8.5" fill="none" stroke="#888" stroke-width="0.8"/></svg>
<svg style="left:664.7px;top:200.5px" width="15" height="15" viewBox="0 0 16 16"><rect x="1.5" y="1.5" width="5.5" height="5.5" fill="#fff" stroke="#555" stroke-width="1"/><rect x="9" y="1.5" width="5.5" height="5.5" fill="#fff" stroke="#555" stroke-width="1"/><rect x="1.5" y="9" width="5.5" height="5.5" fill="#e4eef8" stroke="#8aa" stroke-width="1"/><rect x="9" y="9" width="5.5" height="5.5" fill="#fff" stroke="#555" stroke-width="1"/></svg>
<svg style="left:664.7px;top:218.9px" width="15" height="15" viewBox="0 0 16 16"><path d="M7 2 V14.5 H1.5Z" fill="none" stroke="#444" stroke-width="1.1"/><path d="M9 2 V14.5 H14.5Z" fill="#4a86c0"/></svg>
<svg style="left:664.7px;top:236.5px" width="15" height="15" viewBox="0 0 16 16"><path d="M1 10 Q4 1 8 8 Q12 15 15 5" fill="none" stroke="#555" stroke-width="1.1"/></svg>
<svg style="left:664.7px;top:255.5px" width="15" height="15" viewBox="0 0 16 16"><path d="M1.5 1.5 H14.5 V14.5 H1.5Z" fill="none" stroke="#555" stroke-width="1" stroke-dasharray="1 1"/><path d="M14.5 1.5 L1.5 14.5 H14.5 V1.5" fill="none" stroke="#555" stroke-width="1.1"/></svg>
<svg style="left:664.7px;top:274.5px" width="15" height="15" viewBox="0 0 16 16"><path d="M1.5 4 V1.5 H4 M14.5 1.5" fill="none" stroke="#555" stroke-width="0.9" stroke-dasharray="1 1"/><path d="M1.5 14.5 V8 Q1.5 1.5 8 1.5 H14.5 V14.5Z" fill="none" stroke="#555" stroke-width="1.1"/></svg>
<svg style="left:664.7px;top:293.5px" width="15" height="15" viewBox="0 0 16 16"><path d="M1 8.5 H4 M12 8.5 H15 M6 14 L10 2" stroke="#555" stroke-width="1.1"/><path d="M5 8.5 H11" stroke="#aaa" stroke-width="0.8" stroke-dasharray="1 1"/></svg>
<svg style="left:664.7px;top:312.5px" width="15" height="15" viewBox="0 0 16 16"><path d="M11 15.5 L15 1" stroke="#555" stroke-width="1.1"/><path d="M1 5.5 H8 M1 9.5 H8" stroke="#555" stroke-width="1.1" stroke-dasharray="1.5 1"/><path d="M7 3.8 L10 5.5 L7 7.2Z" fill="#4a86c0"/></svg>
<svg style="left:664.7px;top:330.5px" width="15" height="15" viewBox="0 0 16 16"><path d="M1.5 6 L5 2 H15 L11.5 6Z" fill="#444"/><path d="M1.5 6 H11.5 V15 H1.5Z" fill="#555"/><path d="M11.5 6 L15 2 V11 L11.5 15Z" fill="#4a86c0"/></svg>
<svg style="left:664.7px;top:348.9px" width="15" height="15" viewBox="0 0 16 16"><path d="M1.5 5 V14.5 H14.5 V5 M1.5 5 H4 M12 5 H14.5" fill="none" stroke="#555" stroke-width="1.1"/><path d="M4 5 Q5 2 7 3.5 M12 5 Q11 2 9 3.5" fill="none" stroke="#555" stroke-width="1"/></svg>
<svg style="left:664.7px;top:367.5px" width="15" height="15" viewBox="0 0 16 16"><path d="M0.5 8 H7 M9 8 H15.5" stroke="#4a86c0" stroke-width="1.1"/><path d="M7.5 8 L4.5 5.8 V10.2Z M8.5 8 L11.5 5.8 V10.2Z" fill="#4a86c0"/></svg>
<div class="a" style="left:22px;top:451px;width:618px;height:11px;background:#efefef;"></div>
<div class="a" style="left:22px;top:451.3px;width:618px;height:0.8px;background:#fbfbfb;"></div>
<svg style="left:24px;top:452.5px" width="14" height="7" viewBox="0 0 14 7"><path d="M3.8 1.2 L1.2 3.5 L3.8 5.8Z M9.7 1.2 L12.3 3.5 L9.7 5.8Z" fill="#666"/></svg>
<svg style="left:36px;top:451px" width="30" height="10" viewBox="0 0 30 10"><path d="M2.5 0 L5.5 10 L21 10 L24 0" fill="#fafafa" stroke="#444" stroke-width="0.7"/></svg>
<div class="t" style="left:44px;top:452.7px;font-size:6px;color:#111;font-weight:bold"><b style="width:5.2px;height:5.04px;vertical-align:-0.54px"><svg style="left:0.08px;top:0" width="5.04" height="5.04" viewBox="0 0 10 10" preserveAspectRatio="none"><path d="M0.3 2.8 H4 M2.1 0.3 V9.7 M2 3.6 L0.3 7.6 M2.3 4.2 L3.9 6 M5 1.1 H9.7 M5.3 4.1 H9.3 M5 7.1 H9.7 M7.3 0.3 V9.7" fill="none" stroke="currentColor" stroke-width="1.15"/></svg></b><b style="width:5.2px;height:5.04px;vertical-align:-0.54px"><svg style="left:0.08px;top:0" width="5.04" height="5.04" viewBox="0 0 10 10" preserveAspectRatio="none"><path d="M0.5 1.6 H9.5 M3 0.3 V3.4 M7 0.3 V3.4 M1.6 4.6 H8.4 V9.3 H1.6 Z M1.6 6.95 H8.4" fill="none" stroke="currentColor" stroke-width="1.15"/></svg></b></div>
<div class="a" style="left:0px;top:462px;width:683px;height:26px;background:#fff;"></div>
<div class="a" style="left:0px;top:461.6px;width:683px;height:1px;background:#9a9a9a;"></div>
<div class="a" style="left:0px;top:478px;width:683px;height:1px;background:#dcdcdc;"></div>
<div class="a" style="left:0.5px;top:462px;width:1px;height:26px;background:#b0b0b0;"></div>
<div class="a" style="left:0px;top:487.5px;width:683px;height:1px;background:#dcdcdc;"></div>
<div class="t" style="left:2.5px;top:465.2px;font-size:6.6px;font-family:'Liberation Mono',monospace;font-weight:bold;color:#3a3a3a;transform:scaleX(0.82);transform-origin:0 0"><b style="width:7.9px;height:5.54px;vertical-align:-0.59px"><svg style="left:0.57px;top:0" width="6.76" height="5.54" viewBox="0 0 10 10" preserveAspectRatio="none"><path d="M1 1.1 H9 M5 1.1 V9 M2 4.4 H8 M2 6.7 H8 M0.4 9.1 H9.6" fill="none" stroke="currentColor" stroke-width="1.5"/></svg></b><b style="width:7.9px;height:5.54px;vertical-align:-0.59px"><svg style="left:0.57px;top:0" width="6.76" height="5.54" viewBox="0 0 10 10" preserveAspectRatio="none"><path d="M0.5 1.6 H9.5 M3 0.3 V3.4 M7 0.3 V3.4 M1.6 4.6 H8.4 V9.3 H1.6 Z M1.6 6.95 H8.4" fill="none" stroke="currentColor" stroke-width="1.5"/></svg></b>? [<b style="width:7.9px;height:5.54px;vertical-align:-0.59px"><svg style="left:0.57px;top:0" width="6.76" height="5.54" viewBox="0 0 10 10" preserveAspectRatio="none"><path d="M0.5 1.6 H9.5 M3 0.3 V3.4 M7 0.3 V3.4 M1.6 4.6 H8.4 V9.3 H1.6 Z M1.6 6.95 H8.4" fill="none" stroke="currentColor" stroke-width="1.5"/></svg></b>(Yes)/<b style="width:7.9px;height:5.54px;vertical-align:-0.59px"><svg style="left:0.57px;top:0" width="6.76" height="5.54" viewBox="0 0 10 10" preserveAspectRatio="none"><path d="M0.5 1.6 H9.5 M3 0.3 V3.4 M7 0.3 V3.4 M1.6 4.6 H8.4 V9.3 H1.6 Z M1.6 6.95 H8.4" fill="none" stroke="currentColor" stroke-width="1.5"/></svg></b>(No)]&lt;Yes&gt;:</div>
<div class="t" style="left:2.5px;top:472.9px;font-size:6.6px;font-family:'Liberation Mono',monospace;font-weight:bold;color:#3a3a3a;transform:scaleX(0.82);transform-origin:0 0"><b style="width:7.9px;height:5.54px;vertical-align:-0.59px"><svg style="left:0.57px;top:0" width="6.76" height="5.54" viewBox="0 0 10 10" preserveAspectRatio="none"><path d="M1 1.1 H9 M5 1.1 V9 M2 4.4 H8 M2 6.7 H8 M0.4 9.1 H9.6" fill="none" stroke="currentColor" stroke-width="1.5"/></svg></b><b style="width:7.9px;height:5.54px;vertical-align:-0.59px"><svg style="left:0.57px;top:0" width="6.76" height="5.54" viewBox="0 0 10 10" preserveAspectRatio="none"><path d="M0.5 1.6 H9.5 M3 0.3 V3.4 M7 0.3 V3.4 M1.6 4.6 H8.4 V9.3 H1.6 Z M1.6 6.95 H8.4" fill="none" stroke="currentColor" stroke-width="1.5"/></svg></b>? [<b style="width:7.9px;height:5.54px;vertical-align:-0.59px"><svg style="left:0.57px;top:0" width="6.76" height="5.54" viewBox="0 0 10 10" preserveAspectRatio="none"><path d="M0.5 1.6 H9.5 M3 0.3 V3.4 M7 0.3 V3.4 M1.6 4.6 H8.4 V9.3 H1.6 Z M1.6 6.95 H8.4" fill="none" stroke="currentColor" stroke-width="1.5"/></svg></b>(Yes)/<b style="width:7.9px;height:5.54px;vertical-align:-0.59px"><svg style="left:0.57px;top:0" width="6.76" height="5.54" viewBox="0 0 10 10" preserveAspectRatio="none"><path d="M0.5 1.6 H9.5 M3 0.3 V3.4 M7 0.3 V3.4 M1.6 4.6 H8.4 V9.3 H1.6 Z M1.6 6.95 H8.4" fill="none" stroke="currentColor" stroke-width="1.5"/></svg></b>(No)]&lt;Yes&gt;:</div>
<div class="t" style="left:2.5px;top:481.3px;font-size:6.6px;font-family:'Liberation Mono',monospace;font-weight:bold;color:#3a3a3a;transform:scaleX(0.82);transform-origin:0 0"><b style="width:7.9px;height:5.54px;vertical-align:-0.59px"><svg style="left:0.57px;top:0" width="6.76" height="5.54" viewBox="0 0 10 10" preserveAspectRatio="none"><path d="M1 1.1 H9 M5 1.1 V9 M2 4.4 H8 M2 6.7 H8 M0.4 9.1 H9.6" fill="none" stroke="currentColor" stroke-width="1.5"/></svg></b><b style="width:7.9px;height:5.54px;vertical-align:-0.59px"><svg style="left:0.57px;top:0" width="6.76" height="5.54" viewBox="0 0 10 10" preserveAspectRatio="none"><path d="M0.5 1.6 H9.5 M3 0.3 V3.4 M7 0.3 V3.4 M1.6 4.6 H8.4 V9.3 H1.6 Z M1.6 6.95 H8.4" fill="none" stroke="currentColor" stroke-width="1.5"/></svg></b>? [<b style="width:7.9px;height:5.54px;vertical-align:-0.59px"><svg style="left:0.57px;top:0" width="6.76" height="5.54" viewBox="0 0 10 10" preserveAspectRatio="none"><path d="M0.5 1.6 H9.5 M3 0.3 V3.4 M7 0.3 V3.4 M1.6 4.6 H8.4 V9.3 H1.6 Z M1.6 6.95 H8.4" fill="none" stroke="currentColor" stroke-width="1.5"/></svg></b>(Yes)/<b style="width:7.9px;height:5.54px;vertical-align:-0.59px"><svg style="left:0.57px;top:0" width="6.76" height="5.54" viewBox="0 0 10 10" preserveAspectRatio="none"><path d="M0.5 1.6 H9.5 M3 0.3 V3.4 M7 0.3 V3.4 M1.6 4.6 H8.4 V9.3 H1.6 Z M1.6 6.95 H8.4" fill="none" stroke="currentColor" stroke-width="1.5"/></svg></b>(No)]&lt;Yes&gt;:</div>
<div class="a" style="left:99px;top:480px;width:1px;height:7.5px;background:#111;"></div>
<svg style="left:675px;top:463px" width="6" height="14" viewBox="0 0 6 14"><path d="M1 3.5 L3 1.5 L5 3.5 M1 10.5 L3 12.5 L5 10.5" fill="none" stroke="#666" stroke-width="0.8"/></svg>
<svg style="left:640px;top:480px" width="34" height="7" viewBox="0 0 34 7"><path d="M3.5 1.5 L1.5 3.5 L3.5 5.5 M29.5 1.5 L31.5 3.5 L29.5 5.5" fill="none" stroke="#444" stroke-width="0.9"/><rect x="7.5" y="0" width="7.5" height="7" fill="#d8d8d8"/></svg>
<div class="a" style="left:0px;top:488px;width:683px;height:12px;background:#f0f0f0;"></div>
<div class="a" style="left:0px;top:499px;width:683px;height:1px;background:#c4c4c4;"></div>
<div class="t" style="left:2px;top:491.5px;font-size:6.4px;color:#111;">71550.047806, 2724430.284054, 0.000000</div>
<div class="t" style="left:422.4px;top:491px;font-size:6.3px;color:#333;"><b style="width:5.8px;height:5.29px;vertical-align:-0.57px"><svg style="left:0.25px;top:0" width="5.29" height="5.29" viewBox="0 0 10 10" preserveAspectRatio="none"><path d="M0.3 2.8 H4 M2.1 0.3 V9.7 M2 3.6 L0.3 7.6 M2.3 4.2 L3.9 6 M5 1.1 H9.7 M5.3 4.1 H9.3 M5 7.1 H9.7 M7.3 0.3 V9.7" fill="none" stroke="currentColor" stroke-width="1.15"/></svg></b><b style="width:5.8px;height:5.29px;vertical-align:-0.57px"><svg style="left:0.25px;top:0" width="5.29" height="5.29" viewBox="0 0 10 10" preserveAspectRatio="none"><path d="M0.3 2.8 H4 M2.1 0.3 V9.7 M2 3.6 L0.3 7.6 M2.3 4.2 L3.9 6 M5 1.1 H9.7 M5.3 4.1 H9.3 M5 7.1 H9.7 M7.3 0.3 V9.7" fill="none" stroke="currentColor" stroke-width="1.15"/></svg></b></div>
<div class="a" style="left:438.5px;top:489.5px;width:17px;height:9.5px;background:#dce8f5;border:1px solid #8fb0d8"></div>
<div class="t" style="left:440.5px;top:491px;font-size:6.3px;color:#333;"><b style="width:5.8px;height:5.29px;vertical-align:-0.57px"><svg style="left:0.25px;top:0" width="5.29" height="5.29" viewBox="0 0 10 10" preserveAspectRatio="none"><path d="M1 1.1 H9 M5 1.1 V9 M2 4.4 H8 M2 6.7 H8 M0.4 9.1 H9.6" fill="none" stroke="currentColor" stroke-width="1.15"/></svg></b><b style="width:5.8px;height:5.29px;vertical-align:-0.57px"><svg style="left:0.25px;top:0" width="5.29" height="5.29" viewBox="0 0 10 10" preserveAspectRatio="none"><path d="M4.4 0.2 L5.6 1.6 M0.4 2.7 H9.6 M2.4 3.8 L8.2 9.6 M7.6 3.8 L1.6 9.6" fill="none" stroke="currentColor" stroke-width="1.15"/></svg></b></div>
<div class="t" style="left:457.6px;top:491px;font-size:6.3px;color:#333;"><b style="width:5.8px;height:5.29px;vertical-align:-0.57px"><svg style="left:0.25px;top:0" width="5.29" height="5.29" viewBox="0 0 10 10" preserveAspectRatio="none"><path d="M0.3 2.8 H4 M2.1 0.3 V9.7 M2 3.6 L0.3 7.6 M2.3 4.2 L3.9 6 M5 1.1 H9.7 M5.3 4.1 H9.3 M5 7.1 H9.7 M7.3 0.3 V9.7" fill="none" stroke="currentColor" stroke-width="1.15"/></svg></b><b style="width:5.8px;height:5.29px;vertical-align:-0.57px"><svg style="left:0.25px;top:0" width="5.29" height="5.29" viewBox="0 0 10 10" preserveAspectRatio="none"><path d="M0.5 3 H3.6 M2 0.4 V9.6 M0.5 6.3 L3.6 4.8 M4.6 1.2 H9.5 M5.1 1.2 V9.2 M9 1.2 V9.2 M5.1 5.2 H9 M5.1 9 H9" fill="none" stroke="currentColor" stroke-width="1.15"/></svg></b></div>
<div class="a" style="left:474.5px;top:489.5px;width:28px;height:9.5px;background:#dce8f5;border:1px solid #8fb0d8"></div>
<div class="t" style="left:476.5px;top:491px;font-size:6.3px;color:#333;"><b style="width:5.8px;height:5.29px;vertical-align:-0.57px"><svg style="left:0.25px;top:0" width="5.29" height="5.29" viewBox="0 0 10 10" preserveAspectRatio="none"><path d="M0.5 3 H3.6 M2 0.4 V9.6 M0.5 6.3 L3.6 4.8 M4.6 1.2 H9.5 M5.1 1.2 V9.2 M9 1.2 V9.2 M5.1 5.2 H9 M5.1 9 H9" fill="none" stroke="currentColor" stroke-width="1.15"/></svg></b><b style="width:5.8px;height:5.29px;vertical-align:-0.57px"><svg style="left:0.25px;top:0" width="5.29" height="5.29" viewBox="0 0 10 10" preserveAspectRatio="none"><path d="M0.5 1.6 H9.5 M3 0.3 V3.4 M7 0.3 V3.4 M1.6 4.6 H8.4 V9.3 H1.6 Z M1.6 6.95 H8.4" fill="none" stroke="currentColor" stroke-width="1.15"/></svg></b><b style="width:5.8px;height:5.29px;vertical-align:-0.57px"><svg style="left:0.25px;top:0" width="5.29" height="5.29" viewBox="0 0 10 10" preserveAspectRatio="none"><path d="M0.5 3 H3.6 M2 0.4 V9.6 M0.5 6.3 L3.6 4.8 M4.6 1.2 H9.5 M5.1 1.2 V9.2 M9 1.2 V9.2 M5.1 5.2 H9 M5.1 9 H9" fill="none" stroke="currentColor" stroke-width="1.15"/></svg></b><b style="width:5.8px;height:5.29px;vertical-align:-0.57px"><svg style="left:0.25px;top:0" width="5.29" height="5.29" viewBox="0 0 10 10" preserveAspectRatio="none"><path d="M0.5 3 H3.6 M2 0.4 V9.6 M0.5 6.3 L3.6 4.8 M4.6 1.2 H9.5 M5.1 1.2 V9.2 M9 1.2 V9.2 M5.1 5.2 H9 M5.1 9 H9" fill="none" stroke="currentColor" stroke-width="1.15"/></svg></b></div>
<div class="a" style="left:503.4px;top:489.5px;width:27.5px;height:9.5px;background:#dce8f5;border:1px solid #8fb0d8"></div>
<div class="t" style="left:505.4px;top:491px;font-size:6.3px;color:#333;"><b style="width:5.8px;height:5.29px;vertical-align:-0.57px"><svg style="left:0.25px;top:0" width="5.29" height="5.29" viewBox="0 0 10 10" preserveAspectRatio="none"><path d="M0.5 3 H3.6 M2 0.4 V9.6 M0.5 6.3 L3.6 4.8 M4.6 1.2 H9.5 M5.1 1.2 V9.2 M9 1.2 V9.2 M5.1 5.2 H9 M5.1 9 H9" fill="none" stroke="currentColor" stroke-width="1.15"/></svg></b><b style="width:5.8px;height:5.29px;vertical-align:-0.57px"><svg style="left:0.25px;top:0" width="5.29" height="5.29" viewBox="0 0 10 10" preserveAspectRatio="none"><path d="M0.5 1.6 H9.5 M3 0.3 V3.4 M7 0.3 V3.4 M1.6 4.6 H8.4 V9.3 H1.6 Z M1.6 6.95 H8.4" fill="none" stroke="currentColor" stroke-width="1.15"/></svg></b><b style="width:5.8px;height:5.29px;vertical-align:-0.57px"><svg style="left:0.25px;top:0" width="5.29" height="5.29" viewBox="0 0 10 10" preserveAspectRatio="none"><path d="M0.5 3 H3.6 M2 0.4 V9.6 M0.5 6.3 L3.6 4.8 M4.6 1.2 H9.5 M5.1 1.2 V9.2 M9 1.2 V9.2 M5.1 5.2 H9 M5.1 9 H9" fill="none" stroke="currentColor" stroke-width="1.15"/></svg></b><b style="width:5.8px;height:5.29px;vertical-align:-0.57px"><svg style="left:0.25px;top:0" width="5.29" height="5.29" viewBox="0 0 10 10" preserveAspectRatio="none"><path d="M0.5 3 H3.6 M2 0.4 V9.6 M0.5 6.3 L3.6 4.8 M4.6 1.2 H9.5 M5.1 1.2 V9.2 M9 1.2 V9.2 M5.1 5.2 H9 M5.1 9 H9" fill="none" stroke="currentColor" stroke-width="1.15"/></svg></b></div>
<div class="a" style="left:532.2px;top:489.5px;width:18px;height:9.5px;background:#dce8f5;border:1px solid #8fb0d8"></div>
<div class="t" style="left:534.5px;top:491.5px;font-size:6.3px;color:#333;">DYN</div>
<div class="a" style="left:551.3px;top:489.5px;width:16.5px;height:9.5px;background:#dce8f5;border:1px solid #8fb0d8"></div>
<div class="t" style="left:553.3px;top:491px;font-size:6.3px;color:#333;"><b style="width:5.8px;height:5.29px;vertical-align:-0.57px"><svg style="left:0.25px;top:0" width="5.29" height="5.29" viewBox="0 0 10 10" preserveAspectRatio="none"><path d="M0.5 3 H3.6 M2 0.4 V9.6 M0.5 6.3 L3.6 4.8 M4.6 1.2 H9.5 M5.1 1.2 V9.2 M9 1.2 V9.2 M5.1 5.2 H9 M5.1 9 H9" fill="none" stroke="currentColor" stroke-width="1.15"/></svg></b><b style="width:5.8px;height:5.29px;vertical-align:-0.57px"><svg style="left:0.25px;top:0" width="5.29" height="5.29" viewBox="0 0 10 10" preserveAspectRatio="none"><path d="M0.5 1.6 H9.5 M3 0.3 V3.4 M7 0.3 V3.4 M1.6 4.6 H8.4 V9.3 H1.6 Z M1.6 6.95 H8.4" fill="none" stroke="currentColor" stroke-width="1.15"/></svg></b></div>
<div class="t" style="left:570px;top:491px;font-size:6.3px;color:#3333dd;"><b style="width:5.83px;height:5.29px;vertical-align:-0.57px"><svg style="left:0.27px;top:0" width="5.29" height="5.29" viewBox="0 0 10 10" preserveAspectRatio="none"><path d="M0.5 3 H3.6 M2 0.4 V9.6 M0.5 6.3 L3.6 4.8 M4.6 1.2 H9.5 M5.1 1.2 V9.2 M9 1.2 V9.2 M5.1 5.2 H9 M5.1 9 H9" fill="none" stroke="currentColor" stroke-width="1.15"/></svg></b><b style="width:5.83px;height:5.29px;vertical-align:-0.57px"><svg style="left:0.27px;top:0" width="5.29" height="5.29" viewBox="0 0 10 10" preserveAspectRatio="none"><path d="M4.4 0.2 L5.6 1.6 M0.4 2.7 H9.6 M2.4 3.8 L8.2 9.6 M7.6 3.8 L1.6 9.6" fill="none" stroke="currentColor" stroke-width="1.15"/></svg></b><b style="width:5.83px;height:5.29px;vertical-align:-0.57px"><svg style="left:0.27px;top:0" width="5.29" height="5.29" viewBox="0 0 10 10" preserveAspectRatio="none"><path d="M0.5 3 H3.6 M2 0.4 V9.6 M0.5 6.3 L3.6 4.8 M4.6 1.2 H9.5 M5.1 1.2 V9.2 M9 1.2 V9.2 M5.1 5.2 H9 M5.1 9 H9" fill="none" stroke="currentColor" stroke-width="1.15"/></svg></b><b style="width:5.83px;height:5.29px;vertical-align:-0.57px"><svg style="left:0.27px;top:0" width="5.29" height="5.29" viewBox="0 0 10 10" preserveAspectRatio="none"><path d="M0.5 3 H3.6 M2 0.4 V9.6 M0.5 6.3 L3.6 4.8 M4.6 1.2 H9.5 M5.1 1.2 V9.2 M9 1.2 V9.2 M5.1 5.2 H9 M5.1 9 H9" fill="none" stroke="currentColor" stroke-width="1.15"/></svg></b><b style="width:5.83px;height:5.29px;vertical-align:-0.57px"><svg style="left:0.27px;top:0" width="5.29" height="5.29" viewBox="0 0 10 10" preserveAspectRatio="none"><path d="M0.8 0.8 H9.2 V9.3 H0.8 Z M2.8 3.2 H7.2 M2.6 5.6 H7.4 M5 3.2 V7.8 M2.8 7.8 H7.2" fill="none" stroke="currentColor" stroke-width="1.15"/></svg></b><b style="width:5.83px;height:5.29px;vertical-align:-0.57px"><svg style="left:0.27px;top:0" width="5.29" height="5.29" viewBox="0 0 10 10" preserveAspectRatio="none"><path d="M0.5 3 H3.6 M2 0.4 V9.6 M0.5 6.3 L3.6 4.8 M4.6 1.2 H9.5 M5.1 1.2 V9.2 M9 1.2 V9.2 M5.1 5.2 H9 M5.1 9 H9" fill="none" stroke="currentColor" stroke-width="1.15"/></svg></b><b style="width:5.83px;height:5.29px;vertical-align:-0.57px"><svg style="left:0.27px;top:0" width="5.29" height="5.29" viewBox="0 0 10 10" preserveAspectRatio="none"><path d="M4.4 0.2 L5.6 1.6 M0.4 2.7 H9.6 M2.4 3.8 L8.2 9.6 M7.6 3.8 L1.6 9.6" fill="none" stroke="currentColor" stroke-width="1.15"/></svg></b><b style="width:5.83px;height:5.29px;vertical-align:-0.57px"><svg style="left:0.27px;top:0" width="5.29" height="5.29" viewBox="0 0 10 10" preserveAspectRatio="none"><path d="M0.5 3 H3.6 M2 0.4 V9.6 M0.5 6.3 L3.6 4.8 M4.6 1.2 H9.5 M5.1 1.2 V9.2 M9 1.2 V9.2 M5.1 5.2 H9 M5.1 9 H9" fill="none" stroke="currentColor" stroke-width="1.15"/></svg></b><b style="width:5.83px;height:5.29px;vertical-align:-0.57px"><svg style="left:0.27px;top:0" width="5.29" height="5.29" viewBox="0 0 10 10" preserveAspectRatio="none"><path d="M0.5 3 H3.6 M2 0.4 V9.6 M0.5 6.3 L3.6 4.8 M4.6 1.2 H9.5 M5.1 1.2 V9.2 M9 1.2 V9.2 M5.1 5.2 H9 M5.1 9 H9" fill="none" stroke="currentColor" stroke-width="1.15"/></svg></b><b style="width:5.83px;height:5.29px;vertical-align:-0.57px"><svg style="left:0.27px;top:0" width="5.29" height="5.29" viewBox="0 0 10 10" preserveAspectRatio="none"><path d="M0.5 3 H3.6 M2 0.4 V9.6 M0.5 6.3 L3.6 4.8 M4.6 1.2 H9.5 M5.1 1.2 V9.2 M9 1.2 V9.2 M5.1 5.2 H9 M5.1 9 H9" fill="none" stroke="currentColor" stroke-width="1.15"/></svg></b><b style="width:5.83px;height:5.29px;vertical-align:-0.57px"><svg style="left:0.27px;top:0" width="5.29" height="5.29" viewBox="0 0 10 10" preserveAspectRatio="none"><path d="M0.5 3 H3.6 M2 0.4 V9.6 M0.5 6.3 L3.6 4.8 M4.6 1.2 H9.5 M5.1 1.2 V9.2 M9 1.2 V9.2 M5.1 5.2 H9 M5.1 9 H9" fill="none" stroke="currentColor" stroke-width="1.15"/></svg></b><b style="width:5.83px;height:5.29px;vertical-align:-0.57px"><svg style="left:0.27px;top:0" width="5.29" height="5.29" viewBox="0 0 10 10" preserveAspectRatio="none"><path d="M0.5 3 H3.6 M2 0.4 V9.6 M0.5 6.3 L3.6 4.8 M4.6 1.2 H9.5 M5.1 1.2 V9.2 M9 1.2 V9.2 M5.1 5.2 H9 M5.1 9 H9" fill="none" stroke="currentColor" stroke-width="1.15"/></svg></b></div>
<svg style="left:648.5px;top:490.5px" width="8" height="8" viewBox="0 0 16 16"><path d="M3 3 H7 V7 H3Z M9 3 H13 V7 H9Z" fill="#2aa58a"/><path d="M1 15 L4 8 H7 L8 11 L9 8 H12 L15 15 H11.5 L10.5 12 L8 15 L5.5 12 L4.5 15Z" fill="#2aa58a"/></svg>
<div class="t" style="left:657.7px;top:491.5px;font-size:6.5px;color:#333;">MxCAD</div>
<svg style="left:0;top:0" width="683" height="500" viewBox="0 0 683 500">
<path fill-rule="evenodd" fill="#555" d="M584 454 H622.5 Q625.3 454 625.3 456.8 V486 Q625.3 488.7 622.5 488.7 H584 Q581.2 488.7 581.2 486 V456.8 Q581.2 454 584 454 Z M585.5 458.3 V480.8 Q589 476 593 476.5 Q598 477 603 478 Q607 470 611.5 469.3 Q617 469.5 620.7 478 V458.3 Z"/>
<path fill="#555" fill-rule="evenodd" d="M587.6 473.8 L591.6 460.5 H595.2 L599.3 473.8 H596.5 L595.6 470.8 H591.3 L590.4 473.8 Z M591.9 468.5 H595 L593.45 463 Z"/><rect x="601.3" y="460.6" width="3.1" height="13.2" fill="#555"/>
</svg>
<svg style="left:629px;top:464.5px" width="48" height="15" viewBox="0 0 48 15"><g fill="none" stroke="#555" stroke-width="1.9"><path d="M0.3 4.3 H5.6 M3 0 V14.8 M3 5.5 L0.3 11.5 M3.4 6.5 L5.5 9"/><path d="M5.8 4 H9.6 Q8.5 10 6 14 M6.8 6.5 Q8.5 11 10.2 13.5"/><path d="M9.8 4.8 H15 M13.3 0 V13.2 Q13.3 14.5 11.6 14.2 M10.6 7.5 L11.6 10.2"/><path d="M17.8 4.2 H21.8 V11.6 H17.8 Z"/><path d="M23 6.6 H30.2 M26.6 0 V14.8"/><path d="M33.6 1.7 H44.6 M32.3 5.8 H46 M38.2 6 Q36 10 33.2 13 L43.5 12.2 M41.2 9 L45 13.8"/></g></svg>
</body></html>
